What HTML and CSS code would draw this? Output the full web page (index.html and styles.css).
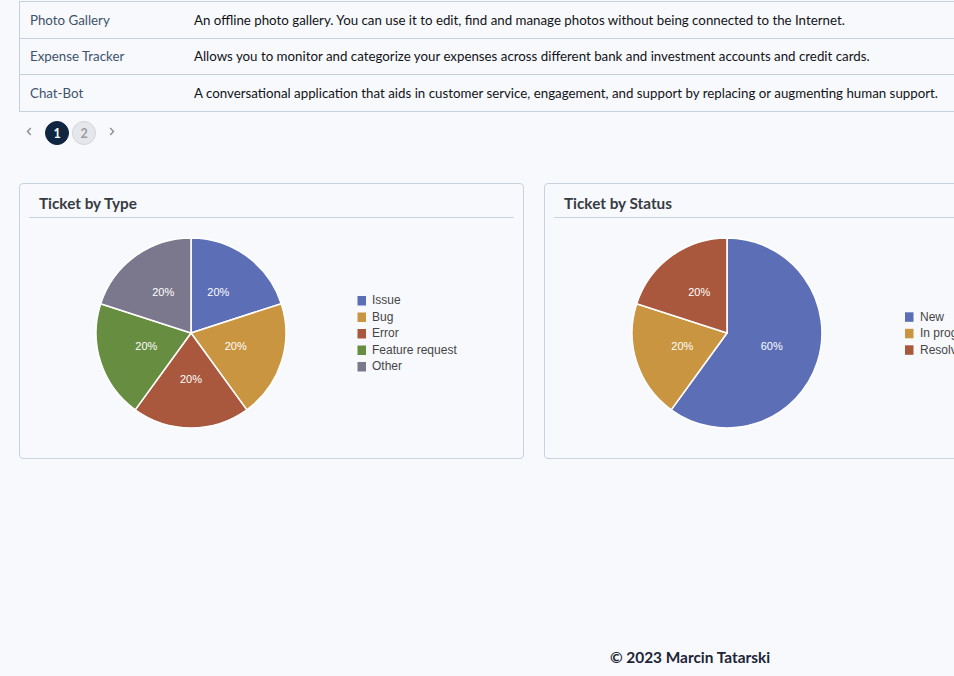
FILE: index.html
```html
<!DOCTYPE html>
<html lang="en">
<head>
<meta charset="utf-8">
<title>Dashboard</title>
<link rel="stylesheet" href="styles.css">
</head>
<body>
<div class="page">
  <table class="projects">
    <colgroup><col class="col-name"><col></colgroup>
    <tbody>
      <tr><td class="name">Photo Gallery</td><td class="desc">An offline photo gallery. You can use it to edit, find and manage photos without being connected to the Internet.</td></tr>
      <tr><td class="name">Expense Tracker</td><td class="desc">Allows you to monitor and categorize your expenses across different bank and investment accounts and credit cards.</td></tr>
      <tr><td class="name">Chat-Bot</td><td class="desc">A conversational application that aids in customer service, engagement, and support by replacing or augmenting human support.</td></tr>
    </tbody>
  </table>

  <nav class="pager">
    <span class="pg-arrow prev"><svg width="6" height="9" viewBox="0 0 6 9"><polyline points="4.8,1 1.5,4.5 4.8,8" fill="none" stroke="#8a8d93" stroke-width="1.4"/></svg></span>
    <span class="pg-num active">1</span>
    <span class="pg-num">2</span>
    <span class="pg-arrow next"><svg width="6" height="9" viewBox="0 0 6 9"><polyline points="1.2,1 4.5,4.5 1.2,8" fill="none" stroke="#8a8d93" stroke-width="1.4"/></svg></span>
  </nav>

  <section class="charts">
    <div class="card">
      <h2 class="card-title">Ticket by Type</h2>
      <svg class="chart" width="503" height="240" viewBox="0 0 503 240">
        <g stroke="#ffffff" stroke-width="1.6" stroke-linejoin="round">
          <path d="M171,115 L171,20 A95,95 0 0 1 261.35,85.64 Z" fill="#5b6eb6"/>
          <path d="M171,115 L261.35,85.64 A95,95 0 0 1 226.84,191.86 Z" fill="#c99541"/>
          <path d="M171,115 L226.84,191.86 A95,95 0 0 1 115.16,191.86 Z" fill="#a9583d"/>
          <path d="M171,115 L115.16,191.86 A95,95 0 0 1 80.65,85.64 Z" fill="#678d41"/>
          <path d="M171,115 L80.65,85.64 A95,95 0 0 1 171,20 Z" fill="#7b788d"/>
        </g>
        <g class="slice-label">
          <text x="198.3" y="78.2">20%</text>
          <text x="215.7" y="132">20%</text>
          <text x="171" y="164.5">20%</text>
          <text x="126.3" y="132">20%</text>
          <text x="143.2" y="78.2">20%</text>
        </g>
        <g class="legend">
          <rect x="337.5" y="78" width="8.5" height="9.5" fill="#5b6eb6"/>
          <text x="352" y="86.4">Issue</text>
          <rect x="337.5" y="94.5" width="8.5" height="9.5" fill="#c99541"/>
          <text x="352" y="102.9">Bug</text>
          <rect x="337.5" y="111" width="8.5" height="9.5" fill="#a9583d"/>
          <text x="352" y="119.4">Error</text>
          <rect x="337.5" y="127.5" width="8.5" height="9.5" fill="#678d41"/>
          <text x="352" y="135.9">Feature request</text>
          <rect x="337.5" y="144" width="8.5" height="9.5" fill="#7b788d"/>
          <text x="352" y="152.4">Other</text>
        </g>
      </svg>
    </div>

    <div class="card card-wide">
      <h2 class="card-title">Ticket by Status</h2>
      <svg class="chart" width="548" height="240" viewBox="0 0 548 240">
        <g stroke="#ffffff" stroke-width="1.6" stroke-linejoin="round">
          <path d="M182,115 L182,20 A95,95 0 1 1 126.16,191.86 Z" fill="#5b6eb6"/>
          <path d="M182,115 L126.16,191.86 A95,95 0 0 1 91.65,85.64 Z" fill="#c99541"/>
          <path d="M182,115 L91.65,85.64 A95,95 0 0 1 182,20 Z" fill="#a9583d"/>
        </g>
        <g class="slice-label">
          <text x="226.7" y="132">60%</text>
          <text x="137.3" y="132">20%</text>
          <text x="154.2" y="78.2">20%</text>
        </g>
        <g class="legend">
          <rect x="360" y="94.3" width="8.5" height="9.5" fill="#5b6eb6"/>
          <text x="375" y="102.9">New</text>
          <rect x="360" y="110.8" width="8.5" height="9.5" fill="#c99541"/>
          <text x="375" y="119.4">In progress</text>
          <rect x="360" y="127.3" width="8.5" height="9.5" fill="#a9583d"/>
          <text x="375" y="135.9">Resolved</text>
        </g>
      </svg>
    </div>
  </section>

  <footer class="footer">© 2023 Marcin Tatarski</footer>
</div>
</body>
</html>
```

FILE: styles.css
```css
html {
  overflow: hidden;
  background: #f8f9fd;
}

body {
  margin: 0;
  font-family: Lato, "Noto Sans", "Liberation Sans", sans-serif;
  color: #1d1f22;
}

.page {
  width: 1380px;
  box-sizing: border-box;
  padding: 1px 19px 0;
}

.projects {
  width: 100%;
  table-layout: fixed;
  border-collapse: separate;
  border-spacing: 0;
  border: 1px solid #c5d0de;
  border-bottom: none;
  font-size: 13.3px;
}

.col-name {
  width: 174px;
}

.projects td {
  padding: 9.5px 10px 8.5px;
  line-height: 17.5px;
  border-bottom: 1px solid #c5d0de;
  white-space: nowrap;
  overflow: hidden;
}

.projects .name {
  color: #3e526b;
}

.projects .desc {
  color: #111316;
  padding-left: 0;
}

.pager {
  display: flex;
  align-items: center;
  height: 24px;
  margin-top: 9.5px;
  padding-left: 2px;
}

.pg-arrow {
  width: 16px;
  display: flex;
  justify-content: center;
  align-items: center;
  margin-top: -3px;
}

.pg-arrow.prev {
  margin-right: 8px;
}

.pg-arrow.next {
  margin-left: 8px;
}

.pg-num {
  width: 24px;
  height: 24px;
  box-sizing: border-box;
  border-radius: 50%;
  display: flex;
  align-items: center;
  justify-content: center;
  font-size: 12.5px;
  font-weight: 700;
  background: #e6e7eb;
  border: 1px solid #d2d5da;
  color: #9b9ca0;
}

.pg-num + .pg-num {
  margin-left: 3px;
}

.pg-num.active {
  background: #0f2540;
  border-color: #0f2540;
  color: #ffffff;
}

.charts {
  display: flex;
  gap: 20px;
  margin-top: 38px;
}

.card {
  width: 505px;
  height: 276px;
  box-sizing: border-box;
  border: 1px solid #c9d3e0;
  border-radius: 4px;
  flex: none;
}

.card-wide {
  width: 550px;
}

.card-title {
  margin: 0 9px;
  padding: 9px 10px 4px;
  border-bottom: 1px solid #c9d4e3;
  font-size: 15.3px;
  line-height: 20px;
  font-weight: 700;
  color: #363b43;
}

.chart {
  display: block;
}

.slice-label text {
  font-family: "Liberation Sans", Arial, sans-serif;
  font-size: 11px;
  fill: #ffffff;
  text-anchor: middle;
}

.legend text {
  font-family: "Liberation Sans", Arial, sans-serif;
  font-size: 12px;
  fill: #454545;
}

.footer {
  margin-top: 188px;
  text-align: center;
  font-size: 15.4px;
  line-height: 20px;
  font-weight: 700;
  color: #1b2535;
}
```
